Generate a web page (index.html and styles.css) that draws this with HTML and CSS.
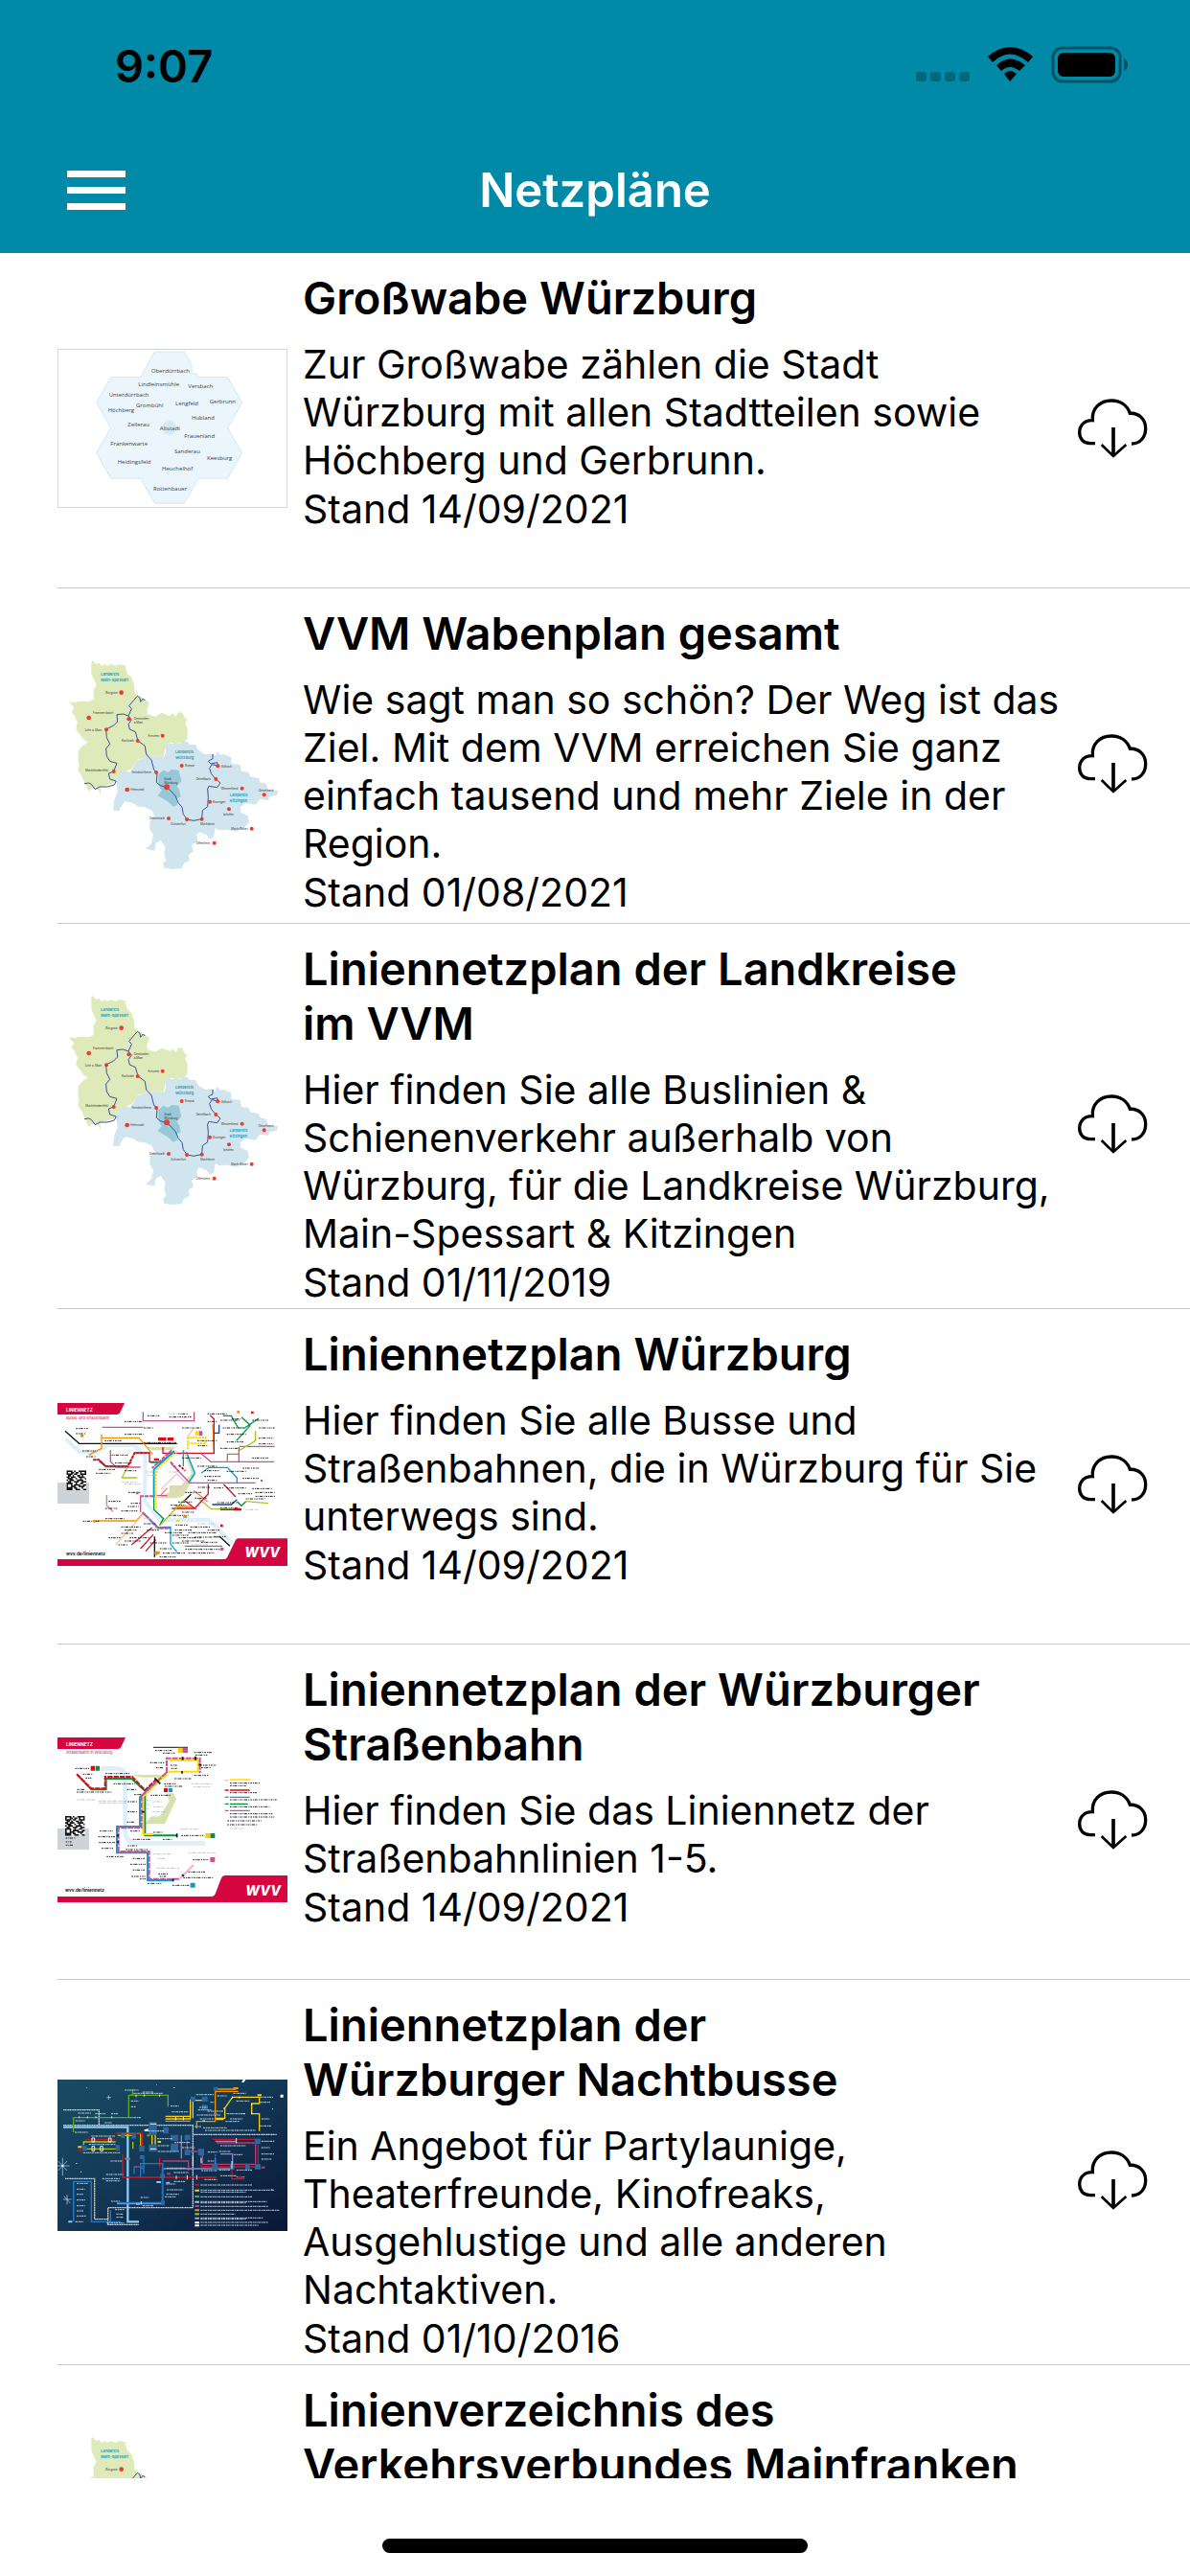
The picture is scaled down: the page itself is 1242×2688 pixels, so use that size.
FILE: index.html
```html
<!DOCTYPE html>
<html lang="de">
<head>
  <meta charset="UTF-8" />
  <meta name="viewport" content="width=device-width, initial-scale=1.0" />
  <title>Netzpläne</title>
  <link rel="stylesheet" href="styles.css">
</head>
<body>

<!-- Shared drawings -->
<svg class="defs" width="0" height="0" aria-hidden="true">
  <symbol id="cloud" viewBox="72 75 222 192">
    <path class="cloud-line" stroke-width="10" d="M129 218H113C92 218 80 203 80 184C80 162 95 145 121 146C118 109 144 84 180 84C208 84 230 99 238 124C266 122 287 143 287 171C287 199 270 219 243 219" />
    <path class="cloud-line" stroke-width="11" d="M186 168V258" />
    <path class="cloud-line" stroke-width="8" d="M149 222L186 258L226 222" />
  </symbol>

  <symbol id="qr" viewBox="0 0 13 13">
    <path fill="#fff" d="M0 0H13V13H0Z" />
    <path class="qr-line" d="M0 .5H4M5 .5H6M8 .5H13M0 1.5H1M3 1.5H5M6 1.5H8M9 1.5H10M12 1.5H13M0 2.5H4M5 2.5H7M9 2.5H13M1 3.5H3M4 3.5H5M7 3.5H9M10 3.5H11M0 4.5H2M3 4.5H6M8 4.5H12M1 5.5H4M6 5.5H7M9 5.5H10M12 5.5H13M0 6.5H1M2 6.5H5M7 6.5H11M1 7.5H3M5 7.5H8M10 7.5H13M0 8.5H4M6 8.5H7M9 8.5H11M0 9.5H1M3 9.5H4M5 9.5H9M11 9.5H13M0 10.5H1M3 10.5H6M8 10.5H12M0 11.5H4M5 11.5H7M10 11.5H11M0 12.5H4M6 12.5H9M11 12.5H13" />
  </symbol>
</svg>

<!-- Top bar -->
<header class="top">
  <div class="status-bar">
    <span class="time">9:07</span>
    <svg class="status-icons" width="224" height="40" viewBox="0 0 224 40" aria-hidden="true">
      <g fill="#000" opacity=".25">
        <rect x="0" y="27" width="11" height="10" rx="3" /><rect x="15" y="27" width="11" height="10" rx="3" />
        <rect x="30" y="27" width="11" height="10" rx="3" /><rect x="45" y="27" width="11" height="10" rx="3" />
      </g>
      <path d="M75 11Q98 -9 122 11L117 17Q98 0 80 17ZM84 20Q98 7 114 20L108 26Q98 18 89 26ZM92 29Q98 23 105 29L98 37Z" />
      <rect x="143" y="2" width="70" height="35" rx="10" fill="none" stroke="#000" stroke-opacity=".4" stroke-width="3" />
      <rect x="148" y="7" width="60" height="25" rx="6" />
      <path d="M217 13Q221 15 221 19.500Q221 24 217 26Z" opacity=".45" />
    </svg>
  </div>
  <div class="nav-bar">
    <button class="menu-button" type="button" aria-label="Menü">
      <span></span><span></span><span></span>
    </button>
    <h1>Netzpläne</h1>
  </div>
</header>

<!-- Plan list -->
<main class="plan-list">
  <article class="plan">
    <svg class="thumb" viewBox="30 43 720 497" role="img" aria-label="Großwabe">
      <rect x="31" y="44" width="718" height="495" fill="#fff" stroke="#d4d6d7" stroke-width="3" />
      <path fill="#eaf5fc" stroke="#d3eaf1" stroke-width="3" d="M334 52H427L450 94V120H466L472 131H563L608 211L563 290L608 369L563 448H471L427 526H334L290 448H197L152 369L197 290L152 211L197 131H290Z" />
      <circle cx="380" cy="290" r="22" fill="#d3eaf3" />
      <g class="wabe-name">
        <text x="324" y="118">Oberdürrbach</text><text x="283" y="160">Lindleinsmühle</text><text x="439" y="167">Versbach</text>
        <text x="191" y="193">Unterdürrbach</text><text x="506" y="213">Gerbrunn</text><text x="276" y="227">Grombühl</text>
        <text x="399" y="221">Lengfeld</text><text x="188" y="241">Höchberg</text><text x="450" y="264">Hubland</text>
        <text x="250" y="285">Zellerau</text><text x="350" y="297">Altstadt</text><text x="427" y="323">Frauenland</text>
        <text x="196" y="346">Frankenwarte</text><text x="396" y="369">Sanderau</text><text x="498" y="391">Keesburg</text>
        <text x="218" y="403">Heidingsfeld</text><text x="357" y="424">Heuchelhof</text><text x="330" y="486">Rottenbauer</text>
      </g>
    </svg>
    <div class="plan-text">
      <h2>Großwabe Würzburg</h2>
      <p>Zur Großwabe zählen die Stadt Würzburg mit allen Stadtteilen sowie Höchberg und Gerbrunn.</p>
      <p class="date">Stand 14/09/2021</p>
    </div>
    <button class="download" type="button" aria-label="Großwabe Würzburg herunterladen"><svg><use href="#cloud" /></svg></button>
  </article>

  <article class="plan">
    <svg class="thumb" viewBox="30 18 720 720" role="img" aria-label="Wabenplan">
      <g id="region">
        <path fill="#d1e5ef" d="M364 318L374 310L388 316L400 311L412 316L424 306L436 308L444 318L462 318L470 334L492 348L515 346L526 352L530 338L540 350L552 348L574 358L574 378L602 380L606 402L628 404L634 418L660 424L664 436L684 440L690 458L720 462L718 476L696 480L688 492L664 488L650 506L618 500L602 514L604 530L626 540L630 560L614 580L590 590L560 584L536 586L524 578L520 606L508 614L496 600L474 592L466 600L470 620L450 632L456 652L440 662L444 680L426 690L418 706L390 708L364 704L360 690L370 680L364 660L368 640L354 618L338 626L334 650L306 644L324 628L330 600L318 580L320 556L334 544L326 524L304 514L284 512L264 500L240 496L228 514L224 526L204 524L208 490L218 466L214 436L220 406L240 400L258 404L272 382L278 368L300 360L330 352L364 356L370 340Z" />
        <path fill="#dfeaba" d="M136 62L140 54L150 66L160 62L170 72L178 66L186 72L200 66L212 72L222 66L242 70L248 96L262 108L270 130L272 156L296 170L306 178L318 188L310 208L312 222L336 230L356 218L366 222L382 228L392 220L400 232L408 218L420 216L428 234L436 240L430 252L438 270L436 300L426 308L410 314L388 312L368 314L366 332L362 356L330 352L300 360L280 366L264 392L244 402L222 408L214 430L204 440L182 446L164 452L166 476L158 460L138 456L128 464L116 440L106 416L94 398L98 380L94 360L96 336L110 320L126 310L112 302L100 286L88 270L92 248L84 228L74 216L82 202L74 194L66 184L84 186L104 182L128 184L144 176L142 150L152 132L144 114L136 98Z" />
        <path fill="#97c8d8" d="M346 412L362 398L376 404L388 396L410 398L414 416L418 432L404 448L412 462L416 482L402 486L406 506L392 512L378 498L362 488L344 478L356 462L346 444Z" />
        <path class="river" d="M114 440L128 438L136 442L148 458L162 450L186 450L208 444L214 432L194 426L190 408L206 402L216 376L194 370L184 354L182 330L194 316L184 296L182 270L206 258L218 246L216 224L236 222L252 228L262 206L254 196L268 180L280 166L288 172L290 184L298 174L304 180" />
        <path class="river" d="M252 228L262 240L252 254L256 270L274 278L282 306L304 322L308 348L324 366L332 396L342 408L340 436L352 446L372 452L386 464L400 480L408 500L420 514L424 536L436 552L456 556L482 551L484 524L500 512L502 484L500 456L504 448L530 452L540 438L526 426L512 410L506 392L514 380L532 384L530 374L510 378L502 370L516 362L516 348" />
        <g fill="#e93c2a">
          <circle cx="230" cy="155" r="7" /><circle cx="128" cy="234" r="7" /><circle cx="253" cy="238" r="6" />
          <circle cx="183" cy="271" r="6" /><circle cx="281" cy="306" r="6" /><circle cx="359" cy="290" r="6" />
          <circle cx="206" cy="402" r="6" /><circle cx="339" cy="405" r="6" /><circle cx="419" cy="384" r="6" />
          <circle cx="532" cy="385" r="6" /><circle cx="526" cy="426" r="6" /><circle cx="608" cy="455" r="6" />
          <circle cx="677" cy="475" r="6" /><circle cx="507" cy="497" r="6" /><circle cx="248" cy="459" r="7" />
          <circle cx="372" cy="451" r="9" /><circle cx="378" cy="549" r="6" /><circle cx="435" cy="552" r="6" />
          <circle cx="482" cy="551" r="6" /><circle cx="567" cy="520" r="6" /><circle cx="638" cy="581" r="6" />
          <circle cx="521" cy="626" r="6" />
        </g>
        <g class="area-name">
          <text x="166" y="101">Landkreis</text><text x="166" y="120">Main-Spessart</text>
          <text x="399" y="345">Landkreis</text><text x="399" y="363">Würzburg</text>
          <text x="569" y="479">Landkreis</text><text x="569" y="497">Kitzingen</text>
        </g>
        <g class="town-name">
          <text x="181" y="159">Burgsinn</text><text x="141" y="221">Frammersbach</text><text x="269" y="240">Gemünden</text>
          <text x="269" y="252">a.Main</text><text x="116" y="276">Lohr a. Main</text><text x="313" y="293">Arnstein</text>
          <text x="231" y="309">Karlstadt</text><text x="118" y="403">Marktheidenfeld</text><text x="262" y="409">Veitshöchheim</text>
          <text x="429" y="388">Rimpar</text><text x="542" y="391">Volkach</text><text x="464" y="429">Dettelbach</text>
          <text x="542" y="459">Wiesentheid</text><text x="659" y="466">Geiselwind</text><text x="516" y="501">Kitzingen</text>
          <text x="258" y="463">Helmstadt</text><text x="364" y="428">Stadt</text><text x="364" y="440">Würzburg</text>
          <text x="317" y="552">Giebelstadt</text><text x="384" y="569">Ochsenfurt</text><text x="478" y="569">Marktbreit</text>
          <text x="549" y="540">Iphofen</text><text x="574" y="584">Markt Bibart</text><text x="464" y="629">Uffenheim</text>
        </g>
      </g>
    </svg>
    <div class="plan-text">
      <h2>VVM Wabenplan gesamt</h2>
      <p>Wie sagt man so schön? Der Weg ist das Ziel. Mit dem VVM erreichen Sie ganz einfach tausend und mehr Ziele in der Region.</p>
      <p class="date">Stand 01/08/2021</p>
    </div>
    <button class="download" type="button" aria-label="VVM Wabenplan herunterladen"><svg><use href="#cloud" /></svg></button>
  </article>

  <article class="plan">
    <svg class="thumb" viewBox="30 18 720 720" role="img" aria-label="Landkreise"><use href="#region" /></svg>
    <div class="plan-text">
      <h2>Liniennetzplan der Landkreise<br>im VVM</h2>
      <p>Hier finden Sie alle Buslinien &amp; Schienenverkehr außerhalb von Würzburg, für die Landkreise Würzburg, Main-Spessart &amp; Kitzingen</p>
      <p class="date">Stand 01/11/2019</p>
    </div>
    <button class="download" type="button" aria-label="Liniennetzplan der Landkreise herunterladen"><svg><use href="#cloud" /></svg></button>
  </article>

  <article class="plan">
    <svg class="thumb" viewBox="30 42 720 510" role="img" aria-label="Liniennetz Würzburg">
      <rect x="30" y="42" width="720" height="510" fill="#fff" />
      <g fill="none" stroke="#dceffa" stroke-width="12">
        <path d="M56 154L100 196H156L186 174H270L304 206V350L350 408H505L578 482" />
      </g>
      <path fill="#d5e2ae" d="M306 180H400L390 190H330ZM424 190L440 204L464 262L424 334L400 340H340L380 322V300H420L450 262Z" />
      <rect x="30" y="291" width="99" height="66" fill="#cdd3d7" />
      <use href="#qr" x="58" y="253" width="62" height="62" />
      <!-- lines -->
      <g class="route">
        <path stroke="#111" d="M54 130L98 169H404" />
        <path stroke="#f39200" d="M168 140V151H285L328 202M128 205L168 184V151M148 411H276L300 386M400 366H450M340 506V520M516 108L520 190" />
        <path stroke="#d4112b" d="M142 220H160L182 240H250L272 198H318V226H350M360 180V199H520V92L508 80M388 372H460L426 346M326 432L262 486M330 454L290 498M338 470L306 506" />
        <path stroke="#008d3c" d="M160 224L182 242H250M320 228H350L396 196M332 340V376L362 404L350 424M592 350L606 364L620 350" />
        <path stroke="#00a0df" d="M424 190V240M434 196L460 262L440 292M480 262L504 244H562L592 276V292M362 430H384V484L404 508" />
        <path stroke="#c6539b" d="M298 70V98H458V70M170 118H298M196 190V226L214 243H290M386 232L444 292H650M480 200L510 226H708M598 180V226M290 334V384M340 332H374M428 490H546M600 178H710" />
        <path stroke="#a8c520" d="M272 196L232 276H280M426 346L350 426M470 340L512 374H606M620 350L690 356M650 130V160L600 190" />
        <path stroke="#1b4592" d="M520 136H536V110M514 360H574L592 344M540 376H606" />
        <path stroke="#e88373" d="M184 330V362L204 382M374 308L354 330M456 316L500 350" />
        <path stroke="#b07d45" d="M562 224V202H600" />
        <path stroke="#f2cc8c" d="M300 388L212 486M436 150L456 122M340 424L334 440" />
        <path stroke="#009640" d="M548 82H574L596 120H616L660 90M634 112L590 160M606 86L634 112" />
        <path stroke="#d4112b" d="M502 296V326L460 372M550 296L588 336" />
        <path stroke="#111" d="M334 460V524M430 346L448 328M540 462L570 490" />
        <path stroke="#f1c3d3" d="M354 312L404 264L430 290L388 332" />
      </g>
      <!-- trunk -->
      <g fill="none" stroke-width="6">
        <path stroke="#00a0df" d="M396 192L332 250V340M300 388L344 432H384" />
        <path stroke="#fd0" stroke-dasharray="7 3" d="M404 194L338 252V376M438 186V150H494V168H440" />
        <path stroke="#c6539b" stroke-dasharray="12 3" d="M388 190L326 246M296 384L346 434H384M288 334H334M384 226L410 256" />
        <path stroke="#d4112b" stroke-dasharray="8 4" d="M142 220H160L182 240H250L272 198H318M410 236L430 254" />
      </g>
      <!-- station names -->
      <g class="specks">
        <path d="M312 82H350M380 86H450M408 76H440M500 76H560M540 96H600M420 120H480M500 100H530M560 140H620M660 120H710M660 152H706M88 122H128M88 138H120M108 192H150M120 210H150M178 160H230M240 140H300M200 205H250M160 250H210M150 262H196M210 230H262M240 254H280" />
        <path d="M420 214H480M468 240H530M490 254H536M490 272H540M500 284H530M560 256H620M610 246H660M640 214H690M560 164H612M540 184H600M468 160H530M470 176H500M548 120H600M640 96H690M660 170H706M576 92H604M300 120H330M240 100H296M300 166H404" />
        <path d="M610 278H660M640 310H704M650 322H710M560 308H620M520 308H550M470 306H510M596 326H640M650 334H712M620 342H680M530 354H590M540 370H600M430 322H480M460 340H500M420 384H460M384 362H430M380 394H440M408 352H452M260 356H290M252 322H290M250 366H284M230 380H280M190 350H230M180 372H220M110 412H160M180 404H240" />
        <path d="M230 430H290M240 440H280M230 450H270M256 464H320M240 474H290M190 464H230M220 486H250M300 420H340M310 440H350M320 480H370M350 498H390M360 512H430M366 448H420M398 440H450M390 456H440M410 464H480M390 480H440M420 474H490M440 448H530M460 462H540M480 478H530M430 500H540M440 512H520M350 524H400M520 460H560M500 440H540M446 430H510M400 424H440" />
      </g>
      <g class="specks grey">
        <path d="M308 258H350M312 268H340M232 290H280M240 296H290M380 258H410M376 76H420M590 120H630M380 390H410M620 376H660M470 420H520M450 486H500M300 404H330" />
      </g>
      <path fill="#e30613" d="M345 150H370V160H345ZM374 150H393V160H374ZM332 215H348V222H332ZM582 372H606V379H582ZM540 422H548V430H540ZM636 68H644V75H636Z" />
      <path fill="#f39200" d="M102 141H112V149H102ZM592 66H600V74H592ZM424 394H436V402H424ZM334 506H350V516H334ZM142 408H150V416H142Z" />
      <path fill="#fd0" d="M462 130H474V144H462ZM402 408H412V414H402Z" />
      <path fill="#c6539b" d="M474 130H484V144H474ZM540 494H550V504H540ZM666 282H672V288H666ZM276 320H284V328H276Z" />
      <!-- frame -->
      <path fill="#d50540" d="M30 42H240L226 72Q223 78 216 78H30ZM30 531H552Q559 531 562 524L586 474Q589 466 596 466H750V552H30Z" />
      <text class="map-head" x="57" y="68">LINIENNETZ</text>
      <text class="map-sub" x="57" y="93">Busse und Straßenbahn</text>
      <text class="map-foot" x="57" y="519">wvv.de/liniennetz</text>
      <text class="map-logo" x="616" y="525">WVV</text>
    </svg>
    <div class="plan-text">
      <h2>Liniennetzplan Würzburg</h2>
      <p>Hier finden Sie alle Busse und Straßenbahnen, die in Würzburg für Sie unterwegs sind.</p>
      <p class="date">Stand 14/09/2021</p>
    </div>
    <button class="download" type="button" aria-label="Liniennetzplan Würzburg herunterladen"><svg><use href="#cloud" /></svg></button>
  </article>

  <article class="plan">
    <svg class="thumb" viewBox="30 39 720 516" role="img" aria-label="Straßenbahnnetz">
      <rect x="30" y="39" width="720" height="516" fill="#fff" />
      <path fill="none" stroke="#dceffa" stroke-width="14" d="M166 136H218Q242 138 242 164V330Q242 370 284 370H492" />
      <path fill="#d5e2ae" d="M264 156H380L350 176L340 164H290ZM370 214H392L402 232L366 310H302L324 286H350L380 238Z" />
      <rect x="30" y="324" width="99" height="66" fill="#cdd3d7" />
      <use href="#qr" x="54" y="285" width="62" height="62" />
      <!-- lines -->
      <g fill="none" stroke-width="6">
        <path stroke="#009640" d="M94 158L136 202H182V168H262L304 206L348 174M304 216V346H404" />
        <path stroke="#e30613" stroke-dasharray="16 3" d="M90 154L136 199H179V162H264L304 204L340 170" />
        <path stroke="#00a0df" d="M340 178L288 226V318H216V400H312V486H392" />
        <path stroke="#fd0" d="M376 148L298 224V342H330M378 146H470V110H380" />
        <path stroke="#c6539b" stroke-dasharray="18 3" d="M370 150L293 222V322H221V396H317V482H412M372 150V104H476V150" />
        <path stroke="#edb0d4" d="M412 482L456 438" />
      </g>
      <path fill="none" stroke="#111" stroke-width="3" d="M330 70H438" />
      <path fill="none" stroke="#111" stroke-width="5" d="M334 166L352 184M294 272H302M422 100V110M462 98V110M472 124H480M420 144V152M216 346H222M216 366H222M404 340V352M392 481V490M420 468L426 474" />
      <g class="specks">
        <path d="M86 136H130M110 154H140M118 166H136M92 202H116M90 210H200M180 152H256M206 184H272M248 202H280M320 118H366M338 134H364M336 80H388M360 88H400M458 86H514M462 94H500M478 126H526M480 134H510M384 126H404M386 136H404M396 168H448M458 158H502M364 184H400M366 192H422M322 220H386M270 218H292M250 240H282M250 272H282M248 304H274M258 332H288M266 358H320M330 336H360M360 358H388M418 346H488" />
        <path d="M162 332H204M158 350H210M160 368H210M168 386H204M184 412H236M250 378H280M244 390H312M266 418H306M258 436H306M266 454H304M262 474H306M288 482H306M312 496H356M390 502H442M346 466H376M350 474H370M440 460H492M424 478H520M454 422H502M56 354H86M56 366H74M56 376H80" />
        <path d="M570 182H664M570 190H620M570 212H654M570 234H716M570 256H694M570 278H706M570 288H710M562 300H668M562 312H656" />
      </g>
      <g class="specks grey">
        <path d="M92 234H148M160 238H250M160 244H244M328 240H360M330 256H360M328 272H372M310 236H320M310 250H320M414 326H472M330 404H388M344 418H370M440 400H524M342 448H414M450 184H516M456 194H506M570 324H616M310 262H318" />
      </g>
      <g fill="none" stroke-width="4">
        <path stroke="#fd0" d="M554 173H566M570 171H634" /><path stroke="#e30613" d="M554 204H566M570 204H632" />
        <path stroke="#00a0df" d="M554 226H566M570 226H632" /><path stroke="#009640" d="M554 247H566M570 247H626" />
        <path stroke="#c6539b" d="M554 268H566M570 268H632" />
      </g>
      <path fill="#e30613" d="M134 128H147V143H134ZM363 198H375V210H363Z" />
      <path fill="#009640" d="M149 128H162V143H149ZM508 339H523V354H508Z" />
      <path fill="#00a0df" d="M378 198H390V210H378ZM446 494H461V509H446Z" />
      <path fill="#fc0" d="M407 71H422V87H407ZM493 339H508V354H493Z" />
      <path fill="#c6539b" d="M422 71H438V87H422ZM508 414H523V429H508Z" />
      <!-- frame -->
      <path fill="#d50540" d="M30 39H243L229 69Q226 75 219 75H30ZM30 537H514Q521 536 524 529L543 479Q547 471 554 471H750V555H30Z" />
      <text class="map-head" x="57" y="66">LINIENNETZ</text>
      <text class="map-sub" x="57" y="90">Straßenbahn in Würzburg</text>
      <text class="map-foot" x="54" y="522">wvv.de/liniennetz</text>
      <text class="map-logo" x="619" y="534">WVV</text>
    </svg>
    <div class="plan-text">
      <h2>Liniennetzplan der Würzburger Straßenbahn</h2>
      <p>Hier finden Sie das Liniennetz der Straßenbahnlinien 1-5.</p>
      <p class="date">Stand 14/09/2021</p>
    </div>
    <button class="download" type="button" aria-label="Liniennetzplan Straßenbahn herunterladen"><svg><use href="#cloud" /></svg></button>
  </article>

  <article class="plan">
    <svg class="thumb" viewBox="30 45 720 474" role="img" aria-label="Nachtbusnetz">
      <defs>
        <linearGradient id="night" x1="0" y1="0" x2="1" y2="1">
          <stop offset="0" stop-color="#1a4c63" /><stop offset=".45" stop-color="#133a58" /><stop offset="1" stop-color="#0a1636" />
        </linearGradient>
      </defs>
      <rect x="30" y="45" width="720" height="474" fill="url(#night)" />
      <!-- stars -->
      <path fill="none" stroke="#c9dcea" stroke-width="2" d="M46 290V346M30 315H68M32 300L60 330M60 300L32 330M60 406V436M48 420H74M50 410L70 432M190 94V108M184 101H198" />
      <path fill="#fff" d="M606 52L612 45H620L612 55ZM728 92H737V101H728ZM43 312H49V318H43ZM394 69H397V72H394ZM702 136H705V139H702ZM88 306H91V309H88ZM102 332H105V335H102ZM700 388H703V391H700ZM340 60H342V62H340ZM120 70H122V72H120Z" />
      <g class="route">
        <path stroke="#8ccaf2" stroke-width="7" d="M48 194H250V490H285" />
        <path stroke="#d8cdbd" stroke-dasharray="4 1" d="M48 140H160V188M48 188H454V446H188V499H284M54 355H146V482H188M454 217H716" />
        <path stroke="#5ba829" d="M80 210V164H253V94H376V130M265 75V94" />
        <path stroke="#a6c710" d="M112 250V240H212M112 262H222M234 214H290V262M218 220H270M266 240V262" />
        <path stroke="#f9cd13" d="M368 168H446V110H490M368 160H446M454 110V166M524 166H554V134L578 100H662V120H638V152H662V206M526 170H550M326 218V248M336 218V248" />
        <path stroke="#f39200" d="M368 175H446M466 198V176H524V82H596M524 75H590" />
        <path stroke="#d01423" d="M234 280V351H528M296 214V262M212 213H296M118 233H210M406 230V262M576 308V356H616M516 232H658V318H480V266M350 290V318" />
        <path stroke="#b63c74" d="M528 243H650V310H484V270M436 230V270H470M268 318H296M360 300H440V330" />
        <path stroke="#9287c8" d="M540 278H578V324H524V290M360 324H520V310M524 238H590M216 434H360M418 220V292" />
        <path stroke="#1f7bc8" d="M80 490V364H136V490H228M216 430H360V308H290V350M270 340V320M300 290V340M196 454V490" />
        <path stroke="#1f7bc8" stroke-dasharray="5 2" d="M358 320V436M80 364V490M524 280V320" />
      </g>
      <!-- stops -->
      <g fill="#2f659f">
        <path d="M446 98H462V114H446ZM482 98H500V114H482ZM482 124H500V138H482ZM316 178H341V218H316ZM360 194H378V214H360ZM384 218H408V236H384ZM384 246H408V270H384ZM428 218H446V234H428ZM428 264H446V282H428ZM470 262H489V282H470ZM648 230H666V246H648ZM648 310H666V326H648ZM514 310H532V326H514ZM570 310H584V326H570ZM618 310H632V326H618ZM286 252H302V270H286ZM316 248H341V270H316ZM108 252H122V268H108ZM212 250H225V268H212ZM262 212H276V230H262ZM228 212H240V228H228ZM288 282H302V294H288ZM352 340H366V354H352ZM354 424H366V438H354ZM518 68H532V80H518ZM288 314H300V326H288Z" />
      </g>
      <g fill="none" stroke="#e8f0f7" stroke-width="3">
        <path d="M138 228H146V240H138ZM190 228H198V240H190ZM138 254H146V268H138ZM164 254H172V268H164ZM590 228V244M292 426V436M402 346V356M436 344V358M466 344V358M454 284V316M576 300V324M424 162V172M400 162V172M98 160V166M124 160V166M150 160V166M200 160V166M276 92V100M302 92V98M350 92V98M320 262H340M320 184H340M480 290V306M552 132V138M578 98V104M600 98V104M638 120V126M638 148V154M484 174H492M610 152H618" />
      </g>
      <g class="specks night">
        <path d="M240 78H284M268 88H360M296 84H330M260 112H284M260 130H276M256 164H292M94 150H136M148 152H180M198 152H220M86 174H116M178 180H200M84 210H126M384 128H410M388 146H440M464 92H520M508 116H520M474 132H500M470 140H512M530 96H560M580 88H620M590 112H632M664 100H706M664 116H696M668 168H694M664 190H700M560 152H610M570 168H610M556 176H600M486 196H560M492 204H650" />
        <path d="M500 144H550M466 156H540M476 168H520M460 192H480M136 222H210M128 248H212M110 274H226M196 300H234M182 342H236M170 355H226M182 362H226M314 206H364M308 200H316M342 230H390M344 252H380M344 270H380M380 270H410M396 242H446M420 258H460M500 272H530M536 270H572M540 252H620M582 280H610M668 238H710M668 258H696M668 278H708M668 294H700M500 300H520M536 328H570M590 328H640M480 330H530M372 322H430M394 336H440M370 372H400M372 390H424M366 412H400" />
        <path d="M90 370H126M90 388H116M90 404H110M90 422H118M90 440H116M90 456H112M90 472H120M86 490H112M198 426H226M210 452H240M214 466H236M214 476H236M290 414H316M296 440H330M370 404H410M184 494H240M540 346H590M490 358H530M590 350H616M394 364H430" />
        <path d="M478 375H640M478 391H708M478 397H620M478 412H640M478 427H686M478 431H620M478 442H690M478 454H726M478 466H586M478 478H674M478 482H620M478 492H690M478 501H660" />
      </g>
      <g fill="none" stroke-width="6">
        <path stroke="#e30613" d="M460 374H474M94 266H106M594 350H608" /><path stroke="#f9cd13" d="M460 392H474M94 256H106M656 94H669M344 240H354" />
        <path stroke="#5ba829" d="M460 411H474M310 220H320" /><path stroke="#8ccaf2" d="M460 428H474M340 366H354M64 490H76" />
        <path stroke="#b63c74" d="M460 441H474M372 340H384M668 320H680" /><path stroke="#f39200" d="M460 454H474M580 72H596" />
        <path stroke="#a6c710" d="M460 466H474" /><path stroke="#a9a3dd" d="M460 479H474M370 368H382M276 434H288" />
        <path stroke="#fff" d="M460 493H474M460 502H474M302 204H314" /><path stroke="#7b7f86" d="M241 293H258M519 152H530" />
      </g>
    </svg>
    <div class="plan-text">
      <h2>Liniennetzplan der<br>Würzburger Nachtbusse</h2>
      <p>Ein Angebot für Partylaunige, Theaterfreunde, Kinofreaks, Ausgehlustige und alle anderen Nachtaktiven.</p>
      <p class="date">Stand 01/10/2016</p>
    </div>
    <button class="download" type="button" aria-label="Liniennetzplan Nachtbusse herunterladen"><svg><use href="#cloud" /></svg></button>
  </article>

  <article class="plan">
    <svg class="thumb" viewBox="30 18 720 720" role="img" aria-label="Linienverzeichnis"><use href="#region" /></svg>
    <div class="plan-text">
      <h2>Linienverzeichnis des Verkehrsverbundes Mainfranken</h2>
    </div>
    <button class="download" type="button" aria-label="Linienverzeichnis herunterladen"><svg><use href="#cloud" /></svg></button>
  </article>
</main>

<footer class="home-area">
  <div class="home-bar"></div>
</footer>

</body>
</html>
```
FILE: styles.css
```css
* {
  box-sizing: border-box;
}

body {
  margin: 0;
  height: 100vh;
  display: flex;
  flex-direction: column;
  background: #fff;
  color: #000;
  font-family: Inter, "Liberation Sans", sans-serif;
}

h1, h2, p {
  margin: 0;
}

button {
  padding: 0;
  border: 0;
  background: none;
  cursor: pointer;
}

.defs {
  position: absolute;
}

/* Top bar */
.top {
  flex: none;
  background: #008aa7;
}

.status-bar {
  display: flex;
  align-items: center;
  justify-content: space-between;
  height: 132px;
  padding: 4px 62px 0 120px;
}

.time {
  font-size: 47px;
  font-weight: 600;
}

.nav-bar {
  display: grid;
  grid-template-columns: 1fr auto 1fr;
  align-items: center;
  height: 132px;
  padding: 0 70px;
}

.menu-button {
  display: flex;
  flex-direction: column;
  gap: 10px;
  width: 61px;
}

.menu-button span {
  height: 7px;
  background: #fff;
}

h1 {
  color: #fff;
  font-size: 49px;
  font-weight: 600;
}

/* Plan list */
.plan-list {
  flex: 1;
  min-height: 0;
  overflow: hidden;
}

.plan {
  position: relative;
  display: grid;
  grid-template-columns: 240px 1fr 74px;
  column-gap: 16px;
  align-items: center;
  min-height: 350px;
  padding: 18px 44px 2px 60px;
}

.plan::after {
  content: "";
  position: absolute;
  left: 60px;
  right: 0;
  bottom: 0;
  height: 1px;
  background: #c6c6c8;
}

/* the picture stays centred in the first 330px, even in taller rows */
.thumb {
  display: block;
  align-self: start;
  width: 240px;
  height: 330px;
}

.plan-text {
  align-self: start;
  font-size: 41px;
  line-height: 50px;
}

h2 {
  margin-bottom: 16px;
  padding-right: 32px;
  font-size: 47px;
  line-height: 57px;
  font-weight: 600;
}

.date {
  line-height: 52px;
}

.download svg {
  display: block;
  width: 74px;
  height: 64px;
}

.home-area {
  flex: none;
  display: flex;
  justify-content: center;
  height: 102px;
  padding-top: 63px;
}

.home-bar {
  width: 444px;
  height: 15px;
  border-radius: 8px;
  background: #000;
}

/* Drawings */
.cloud-line {
  fill: none;
  stroke: #000;
}

.river {
  fill: none;
  stroke: #3a4fa0;
  stroke-width: 3;
}

.area-name {
  fill: #2596ae;
  font-size: 12px;
  font-weight: 600;
}

.town-name {
  fill: #333;
  font-size: 9px;
}

.wabe-name {
  fill: #3c4348;
  font-family: "Open Sans", sans-serif;
  font-size: 18px;
}

.qr-line {
  fill: none;
  stroke: #111;
  stroke-width: 1;
}

.route {
  fill: none;
  stroke-width: 4;
}

.specks {
  fill: none;
  stroke: #222;
  stroke-width: 3;
  stroke-dasharray: 5 3 3 2 9 4 3 3;
}

.grey {
  stroke: #bbb;
}

.night {
  stroke: #bccbd9;
  stroke-dasharray: 7 2 4 1;
}

.map-head {
  fill: #fff;
  font-size: 14px;
  font-weight: 700;
}

.map-sub {
  fill: #d50540;
  font-size: 12px;
}

.map-foot {
  fill: #222;
  font-size: 14px;
  font-weight: 700;
}

.map-logo {
  fill: #fff;
  font-size: 42px;
  font-style: italic;
  font-weight: 800;
}
```
